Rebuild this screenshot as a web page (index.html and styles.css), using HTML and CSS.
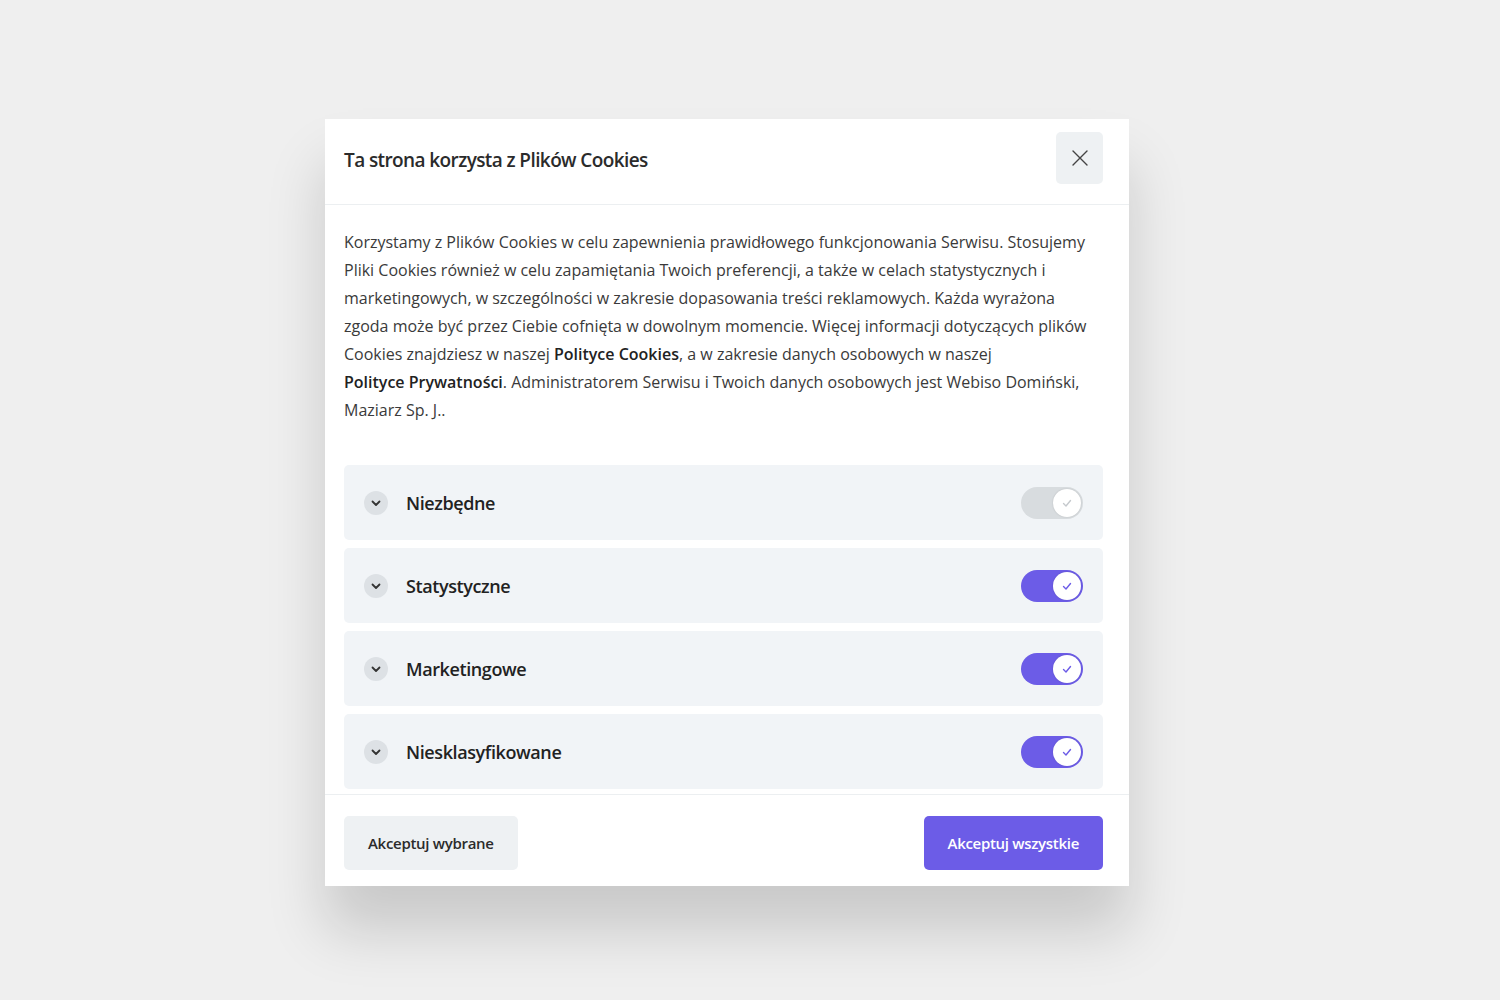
FILE: index.html
```html
<!DOCTYPE html>
<html lang="pl">
<head>
    <meta charset="utf-8">
    <title>Pliki Cookies</title>
    <link rel="stylesheet" href="styles.css">
</head>
<body>
    <div class="modal">
        <div class="modal-header">
            <h2>Ta strona korzysta z Plików Cookies</h2>
            <button class="close-btn" aria-label="Zamknij">
                <svg width="18" height="18" viewBox="0 0 18 18"><path d="M2 2L16 16M16 2L2 16" stroke="#444" stroke-width="1.4" stroke-linecap="round"/></svg>
            </button>
        </div>
        <div class="modal-body">
            <p class="intro">Korzystamy z Plików Cookies w celu zapewnienia prawidłowego funkcjonowania Serwisu. Stosujemy Pliki Cookies również w celu zapamiętania Twoich preferencji, a także w celach statystycznych i marketingowych, w szczególności w zakresie dopasowania treści reklamowych. Każda wyrażona zgoda może być przez Ciebie cofnięta w dowolnym momencie. Więcej informacji dotyczących plików Cookies znajdziesz w naszej <b>Polityce Cookies</b>, a w zakresie danych osobowych w naszej <b>Polityce Prywatności</b>. Administratorem Serwisu i Twoich danych osobowych jest Webiso Domiński, Maziarz Sp. J..</p>

            <div class="categories">
                <div class="category">
                    <span class="chevron"><svg width="12" height="12" viewBox="0 0 12 12"><path d="M2.5 4.5L6 8L9.5 4.5" fill="none" stroke="#333" stroke-width="1.8" stroke-linecap="round" stroke-linejoin="round"/></svg></span>
                    <span class="cat-name">Niezbędne</span>
                    <span class="toggle disabled"><span class="knob"><svg width="12" height="12" viewBox="0 0 12 12"><path d="M2.5 6.5L5 9L9.5 3.5" fill="none" stroke="currentColor" stroke-width="1.4" stroke-linecap="round" stroke-linejoin="round"/></svg></span></span>
                </div>
                <div class="category">
                    <span class="chevron"><svg width="12" height="12" viewBox="0 0 12 12"><path d="M2.5 4.5L6 8L9.5 4.5" fill="none" stroke="#333" stroke-width="1.8" stroke-linecap="round" stroke-linejoin="round"/></svg></span>
                    <span class="cat-name">Statystyczne</span>
                    <span class="toggle"><span class="knob"><svg width="12" height="12" viewBox="0 0 12 12"><path d="M2.5 6.5L5 9L9.5 3.5" fill="none" stroke="currentColor" stroke-width="1.4" stroke-linecap="round" stroke-linejoin="round"/></svg></span></span>
                </div>
                <div class="category">
                    <span class="chevron"><svg width="12" height="12" viewBox="0 0 12 12"><path d="M2.5 4.5L6 8L9.5 4.5" fill="none" stroke="#333" stroke-width="1.8" stroke-linecap="round" stroke-linejoin="round"/></svg></span>
                    <span class="cat-name">Marketingowe</span>
                    <span class="toggle"><span class="knob"><svg width="12" height="12" viewBox="0 0 12 12"><path d="M2.5 6.5L5 9L9.5 3.5" fill="none" stroke="currentColor" stroke-width="1.4" stroke-linecap="round" stroke-linejoin="round"/></svg></span></span>
                </div>
                <div class="category">
                    <span class="chevron"><svg width="12" height="12" viewBox="0 0 12 12"><path d="M2.5 4.5L6 8L9.5 4.5" fill="none" stroke="#333" stroke-width="1.8" stroke-linecap="round" stroke-linejoin="round"/></svg></span>
                    <span class="cat-name">Niesklasyfikowane</span>
                    <span class="toggle"><span class="knob"><svg width="12" height="12" viewBox="0 0 12 12"><path d="M2.5 6.5L5 9L9.5 3.5" fill="none" stroke="currentColor" stroke-width="1.4" stroke-linecap="round" stroke-linejoin="round"/></svg></span></span>
                </div>
            </div>
        </div>
        <div class="modal-footer">
            <button class="btn btn-light">Akceptuj wybrane</button>
            <button class="btn btn-primary">Akceptuj wszystkie</button>
        </div>
    </div>
</body>
</html>
```

FILE: styles.css
```css
body {
    margin: 0;
    padding: 119px 0 0 325px;
    background: #efefef;
    font-family: "Open Sans", "Noto Sans", sans-serif;
    color: #333;
    min-height: 1000px;
    box-sizing: border-box;
}
.modal {
    width: 804px;
    background: #fff;
    box-shadow: 0 45px 55px rgba(0, 0, 0, 0.16);
}
.modal-header {
    display: flex;
    align-items: center;
    justify-content: space-between;
    height: 86px;
    padding: 0 26px 8px 19px;
    box-sizing: border-box;
    border-bottom: 1px solid #eceff1;
}
.modal-header h2 {
    margin: 4px 0 0;
    font-size: 19px;
    font-weight: 600;
    letter-spacing: -0.6px;
    color: #2b2b2b;
}
.close-btn {
    width: 47px;
    height: 52px;
    border: none;
    border-radius: 5px;
    background: #eef1f3;
    display: flex;
    align-items: center;
    justify-content: center;
    cursor: pointer;
}
.modal-body {
    padding: 23px 26px 5px 19px;
}
.intro {
    margin: 0 0 41px;
    font-size: 16px;
    line-height: 28px;
    color: #3a3a3a;
}
.intro b {
    font-weight: 600;
    color: #222;
    white-space: nowrap;
}
.categories {
    display: flex;
    flex-direction: column;
    gap: 8px;
}
.category {
    display: flex;
    align-items: center;
    height: 75px;
    padding: 0 20px;
    background: #f1f4f7;
    border-radius: 5px;
}
.chevron {
    width: 24px;
    height: 24px;
    border-radius: 50%;
    background: #dde1e5;
    display: flex;
    align-items: center;
    justify-content: center;
    margin-right: 18px;
}
.cat-name {
    flex: 1;
    font-size: 18px;
    font-weight: 600;
    letter-spacing: -0.4px;
    color: #222;
}
.toggle {
    width: 62px;
    height: 32px;
    border-radius: 16px;
    background: #6c5ce7;
    display: flex;
    align-items: center;
    justify-content: flex-end;
    padding: 0 2px;
    box-sizing: border-box;
}
.toggle.disabled {
    background: #d8dcdf;
}
.knob {
    width: 28px;
    height: 28px;
    border-radius: 50%;
    background: #fff;
    display: flex;
    align-items: center;
    justify-content: center;
    color: #6c5ce7;
    box-shadow: 0 0 2px rgba(0, 0, 0, 0.15);
}
.toggle.disabled .knob {
    color: #c5c9cd;
}
.modal-footer {
    display: flex;
    justify-content: space-between;
    align-items: flex-start;
    height: 92px;
    padding: 21px 26px 0 19px;
    box-sizing: border-box;
    border-top: 1px solid #eceff1;
}
.btn {
    height: 54px;
    padding: 0 24px;
    border: none;
    border-radius: 5px;
    font-family: inherit;
    font-size: 15px;
    font-weight: 600;
    letter-spacing: -0.3px;
    cursor: pointer;
}
.btn-light {
    background: #eef1f3;
    color: #2b2b2b;
}
.btn-primary {
    background: #6c5ce7;
    color: #fff;
}
```
